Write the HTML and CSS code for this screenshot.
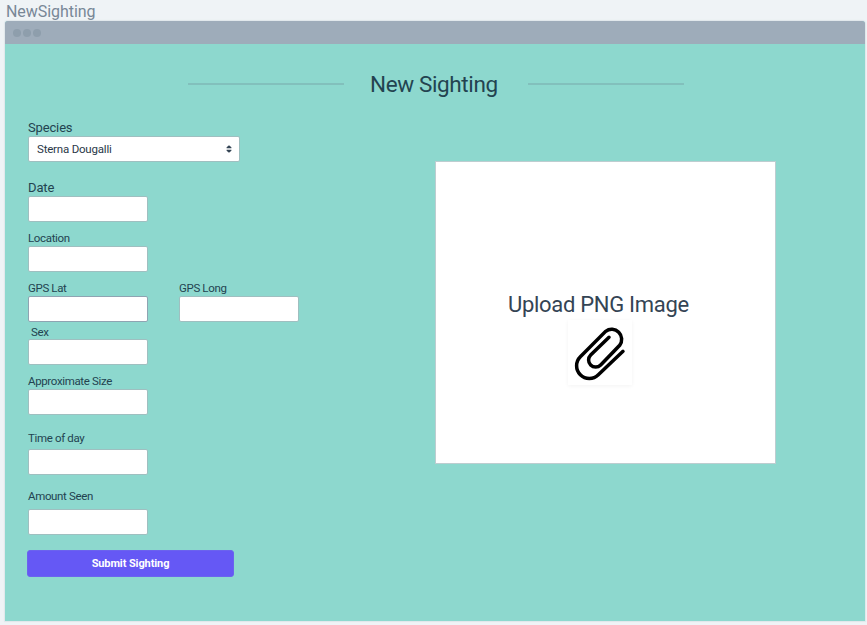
FILE: index.html
```html
<!DOCTYPE html>
<html lang="en">
<head>
<meta charset="utf-8">
<title>New Sighting</title>
<link rel="stylesheet" href="styles.css">
</head>
<body>
<div class="artboard-name">NewSighting</div>
<main class="window">
  <div class="titlebar"><i></i><i></i><i></i></div>
  <header class="heading"><hr><h1>New Sighting</h1><hr></header>
  <div class="content">
    <form class="form">
      <div class="field species"><label class="large">Species</label>
        <div class="box select"><span>Sterna Dougalli</span>
          <svg width="6" height="8" viewBox="0 0 6 8"><path d="M.6 3.2V2.2L3 .2l2.4 2v1zM.6 4.8v1L3 7.8l2.4-2v-1z" fill="#344454"/></svg>
        </div></div>
      <div class="field date"><label class="large">Date</label><div class="box"></div></div>
      <div class="field location"><label>Location</label><div class="box"></div></div>
      <div class="row">
        <div class="field"><label>GPS Lat</label><div class="box strong"></div></div>
        <div class="field"><label>GPS Long</label><div class="box"></div></div>
      </div>
      <div class="field sex"><label>Sex</label><div class="box"></div></div>
      <div class="field size"><label>Approximate Size</label><div class="box"></div></div>
      <div class="field time"><label>Time of day</label><div class="box"></div></div>
      <div class="field amount"><label>Amount Seen</label><div class="box"></div></div>
      <button type="button" class="submit">Submit Sighting</button>
    </form>
    <section class="upload">
      <h2>Upload PNG Image</h2>
      <div class="clip">
        <svg width="64" height="65" viewBox="24 15 192 195" fill="none" stroke="#000" stroke-width="10.5" stroke-linecap="round"><path d="M189 109 115 179A38 38 0 0 1 61 125L137 49A30 30 0 0 1 179 91L122 150A21 21 0 0 1 92 120L147 67"/></svg>
      </div>
    </section>
  </div>
</main>
</body>
</html>
```
FILE: styles.css
```css
* { box-sizing: border-box; }
body {
  margin: 0;
  width: 867px;
  height: 625px;
  overflow: hidden;
  background: #eff3f6;
  color: #234350;
  font-family: Roboto, "Liberation Sans", sans-serif;
}
.artboard-name {
  height: 21px;
  padding-left: 6px;
  font-size: 16px;
  line-height: 23px;
  letter-spacing: -0.05px;
  color: #788796;
}
.window {
  width: 860px;
  height: 600px;
  margin-left: 5px;
  background: #8dd8ce;
  border-radius: 3px 3px 0 0;
  box-shadow: 0 0 1px 1px #dfe7ec;
  overflow: hidden;
}
.titlebar {
  display: flex;
  gap: 2px;
  height: 23px;
  padding: 8px 0 0 8px;
  background: #9eacba;
}
.titlebar i {
  width: 8px;
  height: 8px;
  border-radius: 50%;
  background: #8e9eac;
}
.heading {
  display: flex;
  align-items: center;
  width: 496px;
  height: 40px;
  margin: 20px 0 0 183px;
}
.heading hr {
  width: 156px;
  height: 2px;
  margin: 0;
  border: 0;
  background: #82c0bc;
}
h1 {
  flex: 1;
  margin: 0;
  padding-left: 26px;
  font-size: 22.5px;
  font-weight: 400;
  line-height: 30px;
  letter-spacing: -0.37px;
  white-space: nowrap;
}
.content { display: flex; }
.form { width: 430px; padding: 15px 0 0 23px; }
.field { display: flex; flex-direction: column; width: 120px; }
label {
  height: 17px;
  font-size: 11.5px;
  line-height: 19px;
  letter-spacing: -0.35px;
  white-space: nowrap;
}
.large { font-size: 13px; line-height: 17px; letter-spacing: -0.15px; }
.box {
  height: 26px;
  background: #fff;
  border: 1px solid #9fbfc0;
  border-radius: 2px;
}
.strong { border-color: #8fa4b2; }
.species { width: 212px; margin-bottom: 17px; }
.select {
  display: flex;
  align-items: center;
  justify-content: space-between;
  padding: 0 7px 0 8px;
  font-size: 11.5px;
  letter-spacing: -0.2px;
  color: #2a3848;
}
.date { margin-bottom: 7px; }
.location { margin-bottom: 7px; }
.row { display: flex; gap: 31px; margin-bottom: 1px; }
.sex { margin-bottom: 7px; }
.sex label { padding-left: 3px; height: 16px; }
.size { margin-bottom: 14px; }
.time { margin-bottom: 12px; }
.time label { height: 20px; }
.amount { margin-bottom: 15px; }
.amount label { height: 22px; }
.submit {
  display: block;
  width: 207px;
  height: 27px;
  margin-left: -1px;
  padding: 0;
  border: 1px solid #6b63ee;
  border-radius: 3px;
  background: #6558f5;
  color: #fff;
  font: 700 11px/25px Roboto, sans-serif;
  letter-spacing: -0.1px;
}
.upload {
  width: 341px;
  height: 303px;
  margin-top: 57px;
  padding-top: 128px;
  background: #fff;
  border: 1px solid #bdcdd0;
}
h2 {
  height: 30px;
  margin: 0 0 0 72px;
  color: #344454;
  font-size: 22px;
  font-weight: 400;
  line-height: 30px;
  letter-spacing: -0.3px;
  white-space: nowrap;
}
.clip {
  width: 64px;
  height: 65px;
  margin-left: 132px;
  box-shadow: 0 1px 4px #0000000d;
}
.clip svg { display: block; }
```
